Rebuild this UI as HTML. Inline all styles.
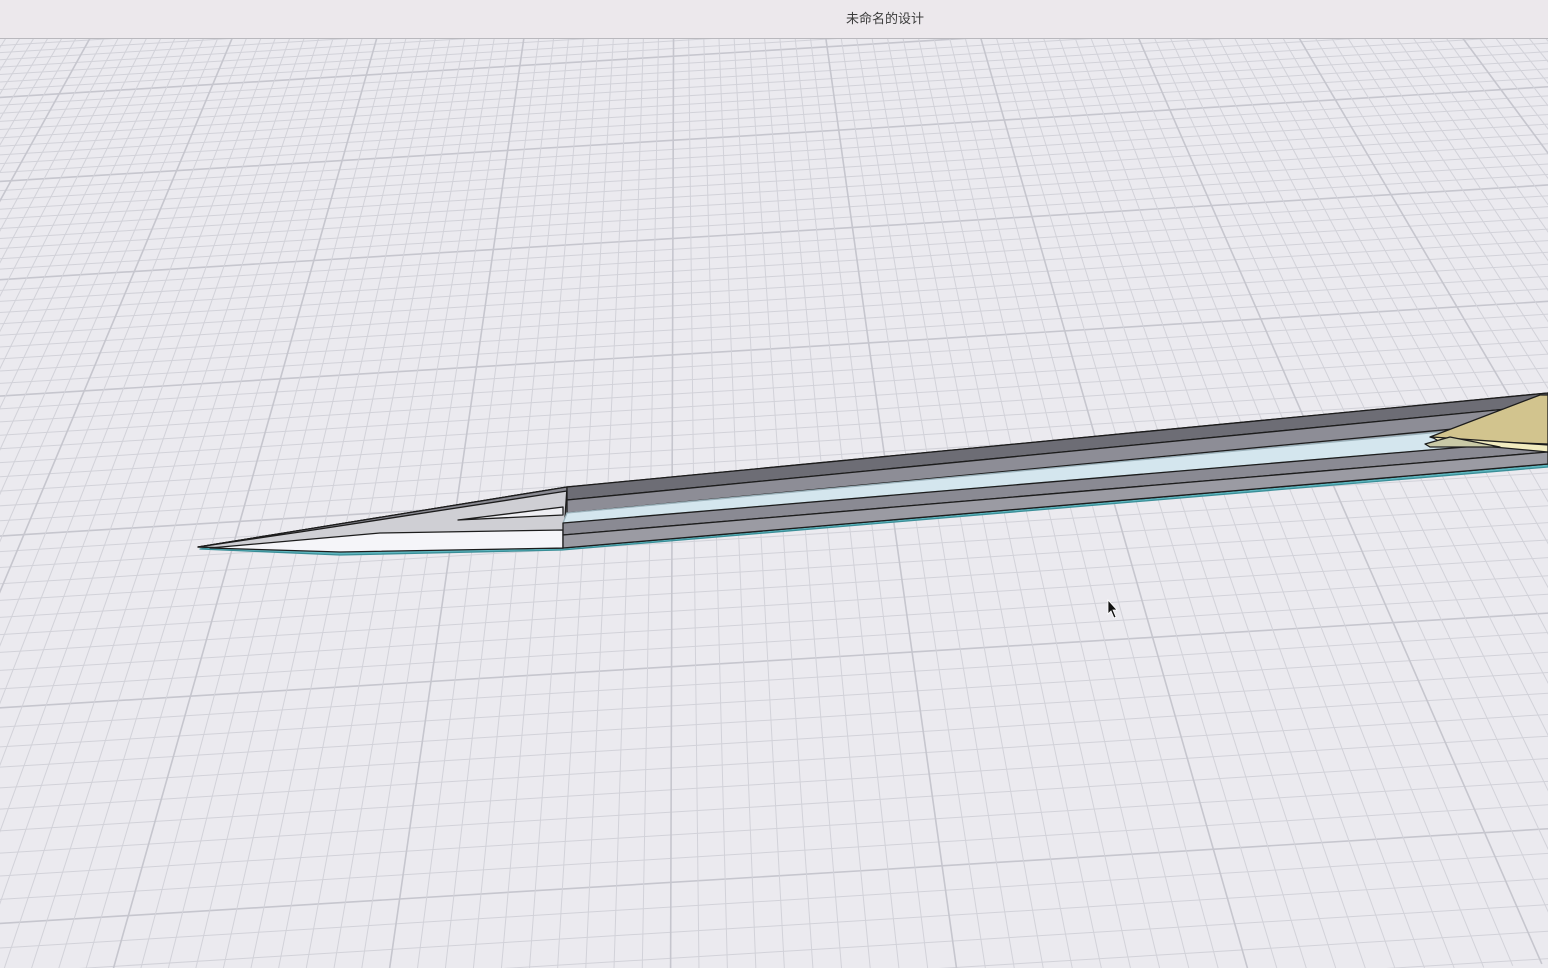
<!DOCTYPE html>
<html><head><meta charset="utf-8"><style>
html,body{margin:0;padding:0;width:1548px;height:968px;overflow:hidden;background:#ebeaef}
#bar{position:absolute;left:0;top:0;width:1548px;height:38px;background:#ece8ec;border-bottom:1px solid #b9b8bd;text-align:center;font:13px "Liberation Sans","Noto Sans CJK SC",sans-serif;color:#3c3c3c;line-height:38px;z-index:2}
#bar span{position:relative;left:111px}
svg{position:absolute;left:0;top:0;overflow:hidden}
</style></head><body>
<div id="bar"><span>未命名的设计</span></div>
<svg id="s" width="1548" height="968" viewBox="0 0 1548 968">
<defs><clipPath id="c"><rect x="0" y="0" width="1548" height="968"/></clipPath></defs>
<g clip-path="url(#c)"><g id="grid" transform="rotate(-3.5 774 500)"></g></g>
<g stroke="#1c1c1c" stroke-width="1.3" stroke-linejoin="round">
<polygon points="200,549 565,491 1548,400 1548,467 562,550 340,555" fill="#5fb7c0" stroke="#3a8f98"/>
<polygon points="198,547 567,487 1548,393 1548,464 563,548 340,551" fill="#96969e"/>
<polygon points="198,547 567,487 563,548 340,551" fill="#cfcfd4"/>
<polygon points="198,547 567,487 567,491 300,532" fill="#8a8a92"/>
<polygon points="210,548 380,533 563,530 563,548 340,552" fill="#f5f5f9"/>
<polygon points="458,520 563,507 563,515" fill="#eeeef2"/>
<polygon points="567,487 1548,393 1548,405 567,500" fill="#6d6d75"/>
<polygon points="567,500 1548,405 1548,420 567,513" fill="#8d8d96"/>
<polygon points="567,513 1430,433 1548,425 1548,440 563,523" fill="#d4e6ee" stroke="#9cb2bb"/>
<polygon points="563,523 1548,440 1548,452 563,535" fill="#8a8a93"/>
<polygon points="563,535 1548,452 1548,464 563,548" fill="#9b9ba3"/>
<polygon points="1430,437 1540,395 1548,395 1548,444 1440,440" fill="#d2c48e"/>
<polygon points="1432,437 1548,445 1548,452 1440,442" fill="#f2ecc0"/>
<polygon points="1425,444 1450,437 1500,447 1430,447" fill="#c9c9a6"/>
</g>
<path d="M1108,600 L1108,614 L1111,611 L1114,618 L1116,617 L1113,610 L1117,610 Z" fill="#111" stroke="#fff" stroke-width="0.8"/>
</svg>
<script>
var g=document.getElementById('grid');
var H=-1025,K=148800,cx=770,s=0.0143,out='';
function ln(x1,y1,x2,y2,maj){return '<line x1="'+x1+'" y1="'+y1+'" x2="'+x2+'" y2="'+y2+'" stroke="'+(maj?'#c6c6ce':'#d2d2d9')+'" stroke-width="'+(maj?1.6:1)+'"/>';}
for(var n=-60;n<=120;n++){var z=78.3+n;var y=H+K/z;if(y<-40||y>1010)continue;
out+=ln(-100,y,1650,y,((n%10)+10)%10==0);}
for(var i=-150;i<=150;i++){var p=i+0.5;var y1=-40,y2=1010;var x1=cx+p*s*(y1-H),x2=cx+p*s*(y2-H);
if(Math.max(x1,x2)<-100||Math.min(x1,x2)>1650)continue;
out+=ln(x1,y1,x2,y2,((i+15)%10+10)%10==0);}
g.innerHTML=out;
</script>
</body></html>
